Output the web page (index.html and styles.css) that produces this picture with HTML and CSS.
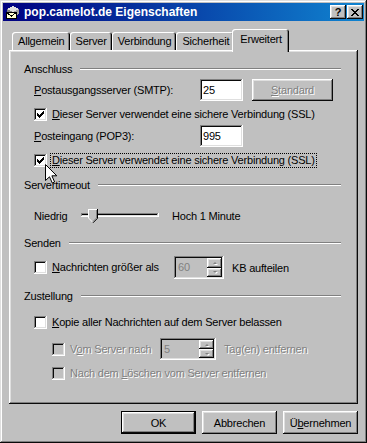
FILE: index.html
```html
<!DOCTYPE html>
<html lang="de">
<head>
  <meta charset="UTF-8">
  <meta name="viewport" content="width=device-width, initial-scale=1.0">
  <title>pop.camelot.de Eigenschaften</title>
  <link rel="stylesheet" href="styles.css">
</head>
<body>
  <div class="window">
    <div class="titlebar">
      <svg class="title-icon" viewBox="0 0 16 16" shape-rendering="crispEdges">
        <path d="M2 5 L8 2 L14 5 L14 10 L8 13 L2 10Z" fill="#808080"/>
        <path d="M2 5 L8 2 L14 5 L8 8Z" fill="#e0e0e0"/>
        <path d="M8 8 L14 5 L14 10 L8 13Z" fill="#a0a0a0"/>
        <rect x="1.5" y="8.5" width="10" height="6" fill="#ffffd0" stroke="#000"/>
        <polyline points="1.5,8.5 6.5,12 11.5,8.5" fill="none" stroke="#000"/>
      </svg>
      <span class="title-text">pop.camelot.de Eigenschaften</span>
      <button class="caption-btn">?</button>
      <button class="caption-btn">
        <svg width="8" height="7" viewBox="0 0 8 7" shape-rendering="crispEdges">
          <path d="M0 0h2v1h-2zM6 0h2v1h-2zM1 1h2v1h-2zM5 1h2v1h-2zM2 2h4v1h-4zM3 3h2v1h-2zM2 4h4v1h-4zM1 5h2v1h-2zM5 5h2v1h-2zM0 6h2v1h-2zM6 6h2v1h-2z" fill="#000"/>
        </svg>
      </button>
    </div>

    <div class="dialog">
      <div class="tabs">
        <div class="tab">Allgemein</div>
        <div class="tab">Server</div>
        <div class="tab">Verbindung</div>
        <div class="tab">Sicherheit</div>
        <div class="tab active">Erweitert</div>
      </div>

      <div class="panel">
        <div class="group">
          <div class="group-title"><span>Anschluss</span><i class="group-line"></i></div>
          <div class="row row-tight">
            <label class="field-label"><u>P</u>ostausgangsserver (SMTP):</label>
            <input class="textbox" type="text" value="25">
            <button class="btn btn-std" disabled><span class="disabled-text"><u>S</u>tandard</span></button>
          </div>
          <div class="row">
            <span class="checkbox"><svg viewBox="0 0 9 9"><path d="M1 3h1v3h-1zM2 4h1v3h-1zM3 5h1v3h-1zM4 4h1v3h-1zM5 3h1v3h-1zM6 2h1v3h-1zM7 1h1v3h-1z"/></svg></span>
            <span class="check-label"><u>D</u>ieser Server verwendet eine sichere Verbindung (SSL)</span>
          </div>
          <div class="row row-tight">
            <label class="field-label"><u>P</u>osteingang (POP3):</label>
            <input class="textbox" type="text" value="995">
          </div>
          <div class="row">
            <span class="checkbox"><svg viewBox="0 0 9 9"><path d="M1 3h1v3h-1zM2 4h1v3h-1zM3 5h1v3h-1zM4 4h1v3h-1zM5 3h1v3h-1zM6 2h1v3h-1zM7 1h1v3h-1z"/></svg></span>
            <span class="check-label focus"><u>D</u>ieser Server verwendet eine sichere Verbindung (SSL)</span>
          </div>
        </div>

        <div class="group">
          <div class="group-title"><span>Servertimeout</span><i class="group-line"></i></div>
          <div class="row slider-row">
            <span class="slider-label">Niedrig</span>
            <svg class="slider" width="78" height="14" viewBox="0 0 78 14" shape-rendering="crispEdges">
              <rect x="0" y="4" width="77" height="1" fill="#808080"/>
              <rect x="0" y="4" width="1" height="4" fill="#808080"/>
              <rect x="1" y="5" width="75" height="1" fill="#000"/>
              <rect x="1" y="6" width="76" height="1" fill="#dfdfdf"/>
              <rect x="0" y="7" width="78" height="1" fill="#fff"/>
              <rect x="77" y="4" width="1" height="4" fill="#fff"/>
              <polygon points="7,0 17,0 17,9 12,14 7,9" fill="#c0c0c0" shape-rendering="auto"/>
              <polyline points="7.5,9 7.5,0.5 16,0.5" fill="none" stroke="#fff"/>
              <line x1="7.5" y1="9" x2="11.5" y2="13" stroke="#fff" shape-rendering="auto"/>
              <polyline points="16.5,0 16.5,9.3 12,13.8" fill="none" stroke="#000" shape-rendering="auto"/>
              <polyline points="15.5,1 15.5,9 12,12.5" fill="none" stroke="#808080" shape-rendering="auto"/>
            </svg>
            <span class="slider-value">Hoch 1 Minute</span>
          </div>
        </div>

        <div class="group">
          <div class="group-title"><span>Senden</span><i class="group-line"></i></div>
          <div class="row">
            <span class="checkbox"></span>
            <span class="check-label split-label"><u>N</u>achrichten größer als</span>
            <div class="spin">
              <span class="spin-value">60</span>
              <span class="spin-buttons"><i class="spin-btn spin-up"></i><i class="spin-btn spin-down"></i></span>
            </div>
            <span class="spin-unit">KB aufteilen</span>
          </div>
        </div>

        <div class="group">
          <div class="group-title"><span>Zustellung</span><i class="group-line"></i></div>
          <div class="row row-wide">
            <span class="checkbox"></span>
            <span class="check-label"><u>K</u>opie aller Nachrichten auf dem Server belassen</span>
          </div>
          <div class="row row-sub row-mid">
            <span class="checkbox disabled"></span>
            <span class="check-label days-label disabled-text">V<u>o</u>m Server nach</span>
            <div class="spin spin-days">
              <span class="spin-value">5</span>
              <span class="spin-buttons"><i class="spin-btn spin-up"></i><i class="spin-btn spin-down"></i></span>
            </div>
            <span class="spin-unit disabled-text">Tag(en) entfernen</span>
          </div>
          <div class="row row-sub">
            <span class="checkbox disabled"></span>
            <span class="check-label disabled-text">Nach dem <u>L</u>öschen vom Server entfernen</span>
          </div>
        </div>
      </div>

      <div class="actions">
        <button class="btn btn-default">OK</button>
        <button class="btn">Abbrechen</button>
        <button class="btn">Ü<u>b</u>ernehmen</button>
      </div>
    </div>

    <svg class="cursor" width="13" height="20" viewBox="0 0 13 20">
      <polygon points="0.5,0.5 0.5,16.5 4.5,12.8 7.3,19 9.6,18 6.9,11.8 11.8,11.8" fill="#fff" stroke="#000" stroke-linejoin="miter"/>
    </svg>
  </div>
</body>
</html>
```

FILE: styles.css
```css
body {
  margin: 0;
  background: #c0c0c0;
  font-family: "Liberation Sans", Arial, sans-serif;
  font-size: 11px;
  letter-spacing: -0.2px;
  color: #000;
}

button, input {
  font: inherit;
  letter-spacing: inherit;
  color: inherit;
  margin: 0;
}

u {
  text-underline-offset: 1px;
}

.window {
  position: relative;
  display: flex;
  flex-direction: column;
  height: 443px;
  box-sizing: border-box;
  padding: 3px;
  box-shadow: inset -1px -1px #0a0a0a, inset 1px 1px #dfdfdf, inset -2px -2px #808080, inset 2px 2px #fff;
}

/* title bar */
.titlebar {
  display: flex;
  align-items: center;
  height: 18px;
  padding: 0 1px 0 2px;
  background: linear-gradient(to right, #000080, #1084d0);
  color: #fff;
}

.title-icon {
  width: 16px;
  height: 16px;
  margin-right: 3px;
}

.title-text {
  flex: 1;
  font-size: 12px;
  font-weight: bold;
  letter-spacing: 0;
}

.caption-btn {
  display: flex;
  align-items: center;
  justify-content: center;
  width: 16px;
  height: 14px;
  padding: 0;
  margin-left: 1px;
  border: none;
  background: #c0c0c0;
  box-shadow: inset -1px -1px #0a0a0a, inset 1px 1px #fff, inset -2px -2px #808080, inset 2px 2px #dfdfdf;
  font-weight: bold;
  font-size: 11px;
  line-height: 1;
  color: #000;
}

/* tabs */
.dialog {
  flex: 1;
  display: flex;
  flex-direction: column;
  padding: 0 6px;
}

.tabs {
  display: flex;
  align-items: flex-end;
  height: 21px;
  margin-top: 8px;
  padding-left: 3px;
}

.tab {
  height: 18px;
  box-sizing: border-box;
  padding: 1px 5px 0 6px;
  line-height: 16px;
  border-radius: 3px 3px 0 0;
  box-shadow: inset 1px 1px #fff, inset -1px 0 #000, inset -2px 0 #808080;
}

.tab.active {
  position: relative;
  z-index: 1;
  height: 23px;
  margin: 0 -2px -2px;
  padding: 2px 7px 0 8px;
  background: #c0c0c0;
}

.panel {
  flex: 1;
  padding: 12px 17px 0 15px;
  box-shadow: inset -1px -1px #0a0a0a, inset 1px 1px #fff, inset -2px -2px #808080, inset 2px 2px #dfdfdf;
}

/* groups */
.group + .group {
  margin-top: 10px;
}

.group-title {
  display: flex;
  align-items: center;
  height: 14px;
}

.group-line {
  flex: 1;
  margin-left: 8px;
  border-top: 1px solid #808080;
  border-bottom: 1px solid #fff;
}

.row {
  display: flex;
  align-items: center;
  margin-top: 6px;
  padding-left: 10px;
}

.row-tight {
  margin-top: 3px;
}

.row-mid {
  margin-top: 8px;
}

.row-wide {
  margin-top: 12px;
}

.row-sub {
  padding-left: 28px;
}

.field-label {
  width: 166px;
}

.textbox {
  box-sizing: border-box;
  width: 43px;
  height: 22px;
  padding: 0 3px;
  border: none;
  outline: none;
  background: #fff;
  box-shadow: inset -1px -1px #fff, inset 1px 1px #808080, inset -2px -2px #dfdfdf, inset 2px 2px #0a0a0a;
}

.disabled-text {
  color: #808080;
  text-shadow: 1px 1px #fff;
}

/* checkboxes */
.checkbox {
  flex: none;
  width: 13px;
  height: 13px;
  box-sizing: border-box;
  padding: 2px;
  background: #fff;
  box-shadow: inset -1px -1px #fff, inset 1px 1px #808080, inset -2px -2px #dfdfdf, inset 2px 2px #0a0a0a;
}

.checkbox svg {
  display: block;
  width: 9px;
  height: 9px;
  shape-rendering: crispEdges;
}

.checkbox.disabled {
  background: #c0c0c0;
}

.check-label {
  margin-left: 3px;
  padding: 1px 2px;
  line-height: 13px;
}

.check-label.focus {
  outline: 1px dotted #000;
  outline-offset: -1px;
}

.split-label {
  width: 120px;
}

.days-label {
  width: 88px;
}

/* slider */
.slider-row {
  height: 21px;
  margin-top: 13px;
}

.slider-label {
  width: 47px;
}

.slider {
  display: block;
}

.slider-value {
  margin-left: 13px;
}

/* spin boxes */
.spin {
  display: flex;
  box-sizing: border-box;
  width: 50px;
  height: 23px;
  padding: 2px;
  box-shadow: inset -1px -1px #fff, inset 1px 1px #808080, inset -2px -2px #dfdfdf, inset 2px 2px #0a0a0a;
}

.spin-days {
  width: 56px;
  height: 22px;
}

.spin-value {
  flex: 1;
  padding-left: 2px;
  color: #808080;
  line-height: 18px;
}

.spin-buttons {
  display: flex;
  flex-direction: column;
  width: 15px;
}

.spin-btn {
  flex: 1;
  display: flex;
  align-items: center;
  justify-content: center;
  box-shadow: inset -1px -1px #0a0a0a, inset 1px 1px #fff, inset -2px -2px #808080, inset 2px 2px #dfdfdf;
}

.spin-btn::after {
  content: "";
  border-left: 2px solid transparent;
  border-right: 2px solid transparent;
  filter: drop-shadow(1px 1px 0 #fff);
}

.spin-up::after {
  border-bottom: 2px solid #808080;
}

.spin-down::after {
  border-top: 2px solid #808080;
}

.spin-unit {
  margin-left: 8px;
}

/* buttons */
.actions {
  display: flex;
  justify-content: flex-end;
  gap: 6px;
  margin-top: 7px;
  padding-bottom: 6px;
}

.btn {
  width: 75px;
  height: 23px;
  padding: 0;
  border: none;
  background: #c0c0c0;
  box-shadow: inset -1px -1px #0a0a0a, inset 1px 1px #fff, inset -2px -2px #808080, inset 2px 2px #dfdfdf;
}

.btn-default {
  box-shadow: inset 0 0 0 1px #000, inset -2px -2px #0a0a0a, inset 2px 2px #fff, inset -3px -3px #808080, inset 3px 3px #dfdfdf;
}

.btn-std {
  width: 81px;
  height: 22px;
  margin-left: 9px;
}

.cursor {
  position: absolute;
  left: 45px;
  top: 164px;
}
```
